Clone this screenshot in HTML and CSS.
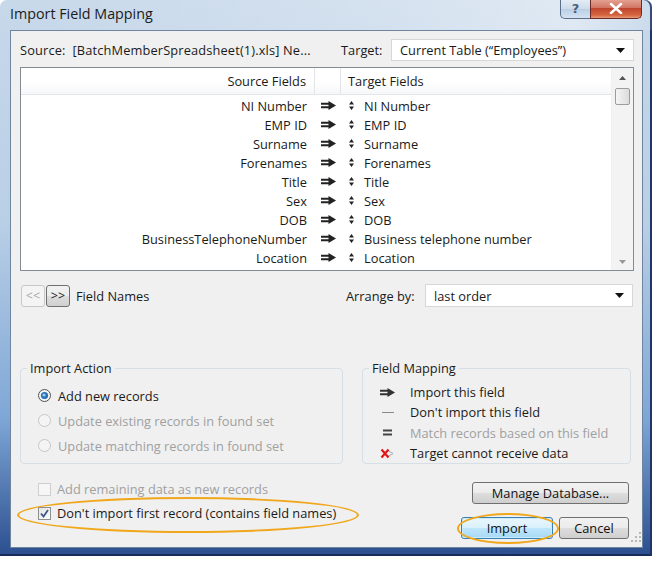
FILE: index.html
```html
<!DOCTYPE html>
<html>
<head>
<meta charset="utf-8">
<link rel="stylesheet" href="styles.css">
</head>
<body>
<div class="window">
  <div class="titlebar">
    <span class="title">Import Field Mapping</span>
    <div class="caption-btns">
      <div class="cbtn help">?</div>
      <div class="cbtn close"><svg width="14" height="11" viewBox="0 0 14 11"><path d="M2 1 L12 10 M12 1 L2 10" stroke="#fff" stroke-width="2.6" stroke-linecap="round"/></svg></div>
    </div>
  </div>
  <div class="client">
    <div class="toprow">
      <span class="src">Source:&nbsp; [BatchMemberSpreadsheet(1).xls] Ne...</span>
      <span class="tlabel">Target:</span>
      <div class="combo target"><span>Current Table (“Employees”)</span><svg class="dd" width="9" height="5" viewBox="0 0 9 5"><path d="M0 0 H9 L4.5 5 Z" fill="#111"/></svg></div>
    </div>

    <div class="list">
      <div class="list-main">
        <div class="lrow lhead">
          <div class="c-src">Source Fields</div>
          <div class="c-arr"></div>
          <div class="c-tgt">Target Fields</div>
        </div>
        <div class="lbody">
          <div class="lrow"><div class="c-src">NI Number</div><div class="c-arr"><svg class="arr" width="15" height="9" viewBox="0 0 15 9"><path d="M0 2.7 H8 M0 6.3 H8" stroke="#222" stroke-width="2"/><path d="M7.5 0 L15 4.5 L7.5 9 Z" fill="#222"/></svg></div><div class="c-tgt"><svg class="ud" width="5" height="9" viewBox="0 0 5 9"><path d="M2.5 0 L5 3.5 H0 Z M2.5 9 L5 5.5 H0 Z" fill="#222"/></svg><span>NI Number</span></div></div>
          <div class="lrow"><div class="c-src">EMP ID</div><div class="c-arr"><svg class="arr" width="15" height="9" viewBox="0 0 15 9"><path d="M0 2.7 H8 M0 6.3 H8" stroke="#222" stroke-width="2"/><path d="M7.5 0 L15 4.5 L7.5 9 Z" fill="#222"/></svg></div><div class="c-tgt"><svg class="ud" width="5" height="9" viewBox="0 0 5 9"><path d="M2.5 0 L5 3.5 H0 Z M2.5 9 L5 5.5 H0 Z" fill="#222"/></svg><span>EMP ID</span></div></div>
          <div class="lrow"><div class="c-src">Surname</div><div class="c-arr"><svg class="arr" width="15" height="9" viewBox="0 0 15 9"><path d="M0 2.7 H8 M0 6.3 H8" stroke="#222" stroke-width="2"/><path d="M7.5 0 L15 4.5 L7.5 9 Z" fill="#222"/></svg></div><div class="c-tgt"><svg class="ud" width="5" height="9" viewBox="0 0 5 9"><path d="M2.5 0 L5 3.5 H0 Z M2.5 9 L5 5.5 H0 Z" fill="#222"/></svg><span>Surname</span></div></div>
          <div class="lrow"><div class="c-src">Forenames</div><div class="c-arr"><svg class="arr" width="15" height="9" viewBox="0 0 15 9"><path d="M0 2.7 H8 M0 6.3 H8" stroke="#222" stroke-width="2"/><path d="M7.5 0 L15 4.5 L7.5 9 Z" fill="#222"/></svg></div><div class="c-tgt"><svg class="ud" width="5" height="9" viewBox="0 0 5 9"><path d="M2.5 0 L5 3.5 H0 Z M2.5 9 L5 5.5 H0 Z" fill="#222"/></svg><span>Forenames</span></div></div>
          <div class="lrow"><div class="c-src">Title</div><div class="c-arr"><svg class="arr" width="15" height="9" viewBox="0 0 15 9"><path d="M0 2.7 H8 M0 6.3 H8" stroke="#222" stroke-width="2"/><path d="M7.5 0 L15 4.5 L7.5 9 Z" fill="#222"/></svg></div><div class="c-tgt"><svg class="ud" width="5" height="9" viewBox="0 0 5 9"><path d="M2.5 0 L5 3.5 H0 Z M2.5 9 L5 5.5 H0 Z" fill="#222"/></svg><span>Title</span></div></div>
          <div class="lrow"><div class="c-src">Sex</div><div class="c-arr"><svg class="arr" width="15" height="9" viewBox="0 0 15 9"><path d="M0 2.7 H8 M0 6.3 H8" stroke="#222" stroke-width="2"/><path d="M7.5 0 L15 4.5 L7.5 9 Z" fill="#222"/></svg></div><div class="c-tgt"><svg class="ud" width="5" height="9" viewBox="0 0 5 9"><path d="M2.5 0 L5 3.5 H0 Z M2.5 9 L5 5.5 H0 Z" fill="#222"/></svg><span>Sex</span></div></div>
          <div class="lrow"><div class="c-src">DOB</div><div class="c-arr"><svg class="arr" width="15" height="9" viewBox="0 0 15 9"><path d="M0 2.7 H8 M0 6.3 H8" stroke="#222" stroke-width="2"/><path d="M7.5 0 L15 4.5 L7.5 9 Z" fill="#222"/></svg></div><div class="c-tgt"><svg class="ud" width="5" height="9" viewBox="0 0 5 9"><path d="M2.5 0 L5 3.5 H0 Z M2.5 9 L5 5.5 H0 Z" fill="#222"/></svg><span>DOB</span></div></div>
          <div class="lrow"><div class="c-src">BusinessTelephoneNumber</div><div class="c-arr"><svg class="arr" width="15" height="9" viewBox="0 0 15 9"><path d="M0 2.7 H8 M0 6.3 H8" stroke="#222" stroke-width="2"/><path d="M7.5 0 L15 4.5 L7.5 9 Z" fill="#222"/></svg></div><div class="c-tgt"><svg class="ud" width="5" height="9" viewBox="0 0 5 9"><path d="M2.5 0 L5 3.5 H0 Z M2.5 9 L5 5.5 H0 Z" fill="#222"/></svg><span>Business telephone number</span></div></div>
          <div class="lrow"><div class="c-src">Location</div><div class="c-arr"><svg class="arr" width="15" height="9" viewBox="0 0 15 9"><path d="M0 2.7 H8 M0 6.3 H8" stroke="#222" stroke-width="2"/><path d="M7.5 0 L15 4.5 L7.5 9 Z" fill="#222"/></svg></div><div class="c-tgt"><svg class="ud" width="5" height="9" viewBox="0 0 5 9"><path d="M2.5 0 L5 3.5 H0 Z M2.5 9 L5 5.5 H0 Z" fill="#222"/></svg><span>Location</span></div></div>
        </div>
      </div>
      <div class="vscroll">
        <div class="sarrow top"><svg width="7" height="4" viewBox="0 0 7 4"><path d="M0 4 L3.5 0 L7 4 Z" fill="#555"/></svg></div>
        <div class="thumb"></div>
        <div class="strack"></div>
        <div class="sarrow"><svg width="7" height="4" viewBox="0 0 7 4"><path d="M0 0 L3.5 4 L7 0 Z" fill="#999"/></svg></div>
      </div>
    </div>

    <div class="navrow">
      <div class="nbtn disabled">&lt;&lt;</div>
      <div class="nbtn">&gt;&gt;</div>
      <span class="fnames">Field Names</span>
      <span class="arrlabel">Arrange by:</span>
      <div class="combo arrange"><span>last order</span><svg class="dd" width="9" height="5" viewBox="0 0 9 5"><path d="M0 0 H9 L4.5 5 Z" fill="#111"/></svg></div>
    </div>

    <div class="groups">
      <fieldset class="grp action">
        <legend>Import Action</legend>
        <div class="gbody">
          <div class="opt"><svg class="radio" width="13" height="13" viewBox="0 0 13 13"><circle cx="6.5" cy="6.5" r="6" fill="#f4f4f4" stroke="#4f5459"/><circle cx="6.5" cy="6.5" r="3.6" fill="#2a6fb3"/><circle cx="6" cy="6" r="1.6" fill="#8fd0f5"/></svg><span>Add new records</span></div>
          <div class="opt disabled"><svg class="radio" width="13" height="13" viewBox="0 0 13 13"><circle cx="6.5" cy="6.5" r="6" fill="#f4f4f4" stroke="#c5c5c5"/></svg><span>Update existing records in found set</span></div>
          <div class="opt disabled"><svg class="radio" width="13" height="13" viewBox="0 0 13 13"><circle cx="6.5" cy="6.5" r="6" fill="#f4f4f4" stroke="#c5c5c5"/></svg><span>Update matching records in found set</span></div>
        </div>
      </fieldset>
      <fieldset class="grp mapping">
        <legend>Field Mapping</legend>
        <div class="gbody">
          <div class="key"><span class="kicon"><svg width="15" height="9" viewBox="0 0 15 9"><path d="M0 2.7 H8 M0 6.3 H8" stroke="#333" stroke-width="2"/><path d="M7.5 0 L15 4.5 L7.5 9 Z" fill="#333"/></svg></span><span>Import this field</span></div>
          <div class="key"><span class="kicon"><svg width="15" height="9" viewBox="0 0 15 9"><path d="M2 4.5 H14" stroke="#888" stroke-width="1"/></svg></span><span>Don't import this field</span></div>
          <div class="key disabled"><span class="kicon"><svg width="15" height="9" viewBox="0 0 15 9"><path d="M3 2.5 H12 M3 6.5 H12" stroke="#444" stroke-width="2"/></svg></span><span>Match records based on this field</span></div>
          <div class="key"><span class="kicon"><svg width="16" height="11" viewBox="0 0 16 11"><path d="M7 2 L13 5.5 L7 9" fill="none" stroke="#aaa" stroke-width="1"/><path d="M1.5 1.5 L8.5 9.5 M8.5 1.5 L1.5 9.5" stroke="#e01818" stroke-width="2.2"/></svg></span><span>Target cannot receive data</span></div>
        </div>
      </fieldset>
    </div>

    <div class="bottom">
      <div class="checks">
        <div class="chk disabled"><span class="box"></span><span>Add remaining data as new records</span></div>
        <div class="chk"><span class="box on"><svg width="11" height="11" viewBox="0 0 11 11"><path d="M2 5.5 L4.5 8.5 L9 2" fill="none" stroke="#3d5688" stroke-width="1.8"/></svg></span><span>Don't import first record (contains field names)</span></div>
      </div>
      <div class="btns">
        <div class="btn manage">Manage Database...</div>
        <div class="btnrow">
          <div class="btn import">Import</div>
          <div class="btn cancel">Cancel</div>
        </div>
      </div>
    </div>
    <div class="grip"><svg width="10" height="10" viewBox="0 0 10 10"><g fill="#b8b8b8"><rect x="8" y="0" width="2" height="2"/><rect x="4" y="4" width="2" height="2"/><rect x="8" y="4" width="2" height="2"/><rect x="0" y="8" width="2" height="2"/><rect x="4" y="8" width="2" height="2"/><rect x="8" y="8" width="2" height="2"/></g></svg></div>
  </div>
  <div class="ring ring1"></div>
  <div class="ring ring2"></div>
</div>
</body>
</html>
```

FILE: styles.css
```css
html, body {
  margin: 0;
  padding: 0;
  background: #ffffff;
}
body {
  font-family: "Open Sans", "Noto Sans", sans-serif;
  font-size: 12.8px;
  color: #1a1a1a;
}
.window {
  position: relative;
  width: 652px;
  height: 556px;
  box-sizing: border-box;
  border-radius: 7px 7px 0 0;
  background: linear-gradient(to bottom, #c7d8ea 0%, #b9cfe6 40%, #7fa7d6 75%, #2b4f8f 100%);
  box-shadow: inset -2px 0 0 #1d3567, inset 0 -2px 0 #172c58;
  padding: 0 9px 0 10px;
  display: flex;
  flex-direction: column;
}
.titlebar {
  height: 30px;
  display: flex;
  align-items: flex-start;
  background: linear-gradient(to right, rgba(255,255,255,0) 0%, rgba(255,255,255,0.25) 60%, rgba(255,255,255,0.45) 88%, rgba(255,255,255,0.1) 100%);
  margin: 0 -9px 0 -10px;
  padding: 0 9px 0 10px;
  border-radius: 7px 7px 0 0;
}
.title {
  font-size: 14.3px;
  color: #1b1b1b;
  margin-top: 4px;
  flex: 1;
}
.caption-btns {
  display: flex;
  margin-top: -1px;
  margin-right: 1px;
}
.cbtn {
  height: 20px;
  display: flex;
  align-items: center;
  justify-content: center;
  box-sizing: border-box;
  border: 1px solid #5c6f8a;
  border-top: none;
}
.help {
  width: 30px;
  border-radius: 0 0 0 5px;
  border-right: none;
  background: linear-gradient(to bottom, #e6eef7 0%, #cfdceb 50%, #b9cde3 51%, #d4e3f2 100%);
  color: #4b5f7a;
  font-weight: bold;
  font-size: 13px;
  font-family: "DejaVu Sans", sans-serif;
}
.close {
  width: 52px;
  border-radius: 0 0 5px 0;
  border-color: #6b2a26;
  background: linear-gradient(to bottom, #e7a597 0%, #d27766 45%, #c0452e 50%, #d5653f 85%, #e79c78 100%);
}

.client {
  flex: 1;
  background: #f0f0f0;
  border: 1px solid #6f849e;
  margin-bottom: 8px;
  padding: 8px 8px 0 9px;
  display: flex;
  flex-direction: column;
  position: relative;
}
.toprow {
  display: flex;
  align-items: center;
  height: 22px;
}
.src {
  width: 321px;
  white-space: nowrap;
  overflow: hidden;
  letter-spacing: 0.15px;
}
.tlabel {
  width: 50px;
}
.combo {
  display: flex;
  align-items: center;
  justify-content: space-between;
  background: #fff;
  border: 1px solid #d7d7d7;
  box-sizing: border-box;
  height: 22px;
  padding: 0 8px 0 8px;
}
.target {
  flex: 1;
}
.list {
  margin-top: 6px;
  height: 204px;
  border: 1px solid #838b95;
  box-sizing: border-box;
  background: #fff;
  display: flex;
}
.list-main {
  flex: 1;
  display: flex;
  flex-direction: column;
}
.lrow {
  display: flex;
  height: 19px;
  align-items: center;
}
.lhead {
  height: 27px;
  background: linear-gradient(to bottom, #ffffff 0%, #ffffff 50%, #f6f7f8 100%);
  border-bottom: 1px solid #e3e5e8;
  box-sizing: border-box;
}
.lbody {
  padding-top: 1px;
}
.c-src {
  width: 294px;
  box-sizing: border-box;
  text-align: right;
  padding-right: 8px;
  white-space: nowrap;
}
.c-arr {
  width: 26px;
  display: flex;
  justify-content: center;
}
.c-tgt {
  flex: 1;
  display: flex;
  align-items: center;
  padding-left: 7px;
}
.lhead .c-src, .lhead .c-arr {
  height: 100%;
  display: flex;
  align-items: center;
  justify-content: flex-end;
  border-right: 1px solid #e3e5e8;
}
.lhead .c-arr {
  width: 25px;
}
.ud {
  margin-right: 10px;
  margin-left: 1px;
}
.vscroll {
  width: 21px;
  display: flex;
  flex-direction: column;
  align-items: center;
  background: #f3f3f3;
  border-left: 1px solid #f0f0f0;
}
.sarrow {
  height: 17px;
  display: flex;
  align-items: center;
  justify-content: center;
}
.sarrow.top {
  height: 20px;
}
.thumb {
  width: 15px;
  height: 17px;
  box-sizing: border-box;
  border: 1px solid #9c9c9c;
  border-radius: 2px;
  background: linear-gradient(to right, #f5f5f5, #dcdcdc);
}
.strack {
  flex: 1;
}

.navrow {
  margin-top: 13px;
  height: 23px;
  display: flex;
  align-items: center;
}
.nbtn {
  width: 24px;
  height: 22px;
  box-sizing: border-box;
  border: 1px solid #707070;
  border-radius: 3px;
  background: linear-gradient(to bottom, #f2f2f2 0%, #ebebeb 50%, #dddddd 51%, #cfcfcf 100%);
  display: flex;
  align-items: center;
  justify-content: center;
  font-size: 12.5px;
  margin-right: 1px;
  color: #222;
}
.nbtn.disabled {
  border-color: #c8c8c8;
  background: #f4f4f4;
  color: #a8a8a8;
  margin-left: 1px;
}
.fnames {
  margin-left: 5px;
  width: 270px;
}
.arrlabel {
  width: 79px;
}
.arrange {
  width: 208px;
  height: 23px;
}

.groups {
  display: flex;
  margin-top: 53px;
}
.grp {
  margin: 0;
  border: 1px solid #d5dfe5;
  border-radius: 4px;
  padding: 0;
  box-sizing: border-box;
  height: 104px;
}
.grp legend {
  padding: 0 3px;
  margin-left: 6px;
  line-height: 16px;
}
.action {
  width: 323px;
}
.action .gbody {
  padding: 7px 0 0 17px;
}
.mapping {
  width: 269px;
  margin-left: 19px;
}
.mapping .gbody {
  padding: 6px 0 0 17px;
}
.opt {
  display: flex;
  align-items: center;
  height: 25px;
}
.opt .radio {
  margin-right: 7px;
}
.disabled {
  color: #a0a0a0;
}
.key {
  display: flex;
  align-items: center;
  height: 20.3px;
}
.kicon {
  width: 30px;
  display: flex;
  align-items: center;
}

.bottom {
  display: flex;
  justify-content: space-between;
  margin-top: 13px;
  padding-right: 5px;
}
.checks {
  padding-left: 18px;
}
.chk {
  display: flex;
  align-items: center;
  height: 24px;
}
.box {
  width: 13px;
  height: 13px;
  box-sizing: border-box;
  border: 1px solid #cfcfcf;
  background: #f6f6f6;
  margin-right: 6px;
  display: flex;
  align-items: center;
  justify-content: center;
}
.box.on {
  border-color: #8e8f8f;
  background: linear-gradient(135deg, #e3e3e3, #fdfdfd);
}
.btns {
  display: flex;
  flex-direction: column;
  align-items: flex-end;
}
.btn {
  height: 22px;
  box-sizing: border-box;
  border: 1px solid #707070;
  border-radius: 3px;
  background: linear-gradient(to bottom, #f2f2f2 0%, #ebebeb 50%, #dddddd 51%, #cfcfcf 100%);
  display: flex;
  align-items: center;
  justify-content: center;
  color: #111;
}
.manage {
  width: 157px;
  margin-top: 5px;
}
.btnrow {
  display: flex;
  margin-top: 13px;
}
.import {
  width: 92px;
  border-color: #3c7fb1;
  background: linear-gradient(to bottom, #eaf6fd 0%, #d9f0fc 50%, #bee6fd 51%, #a7d9f5 100%);
  box-shadow: inset 0 0 0 1px #c8ecfd;
}
.cancel {
  width: 70px;
  margin-left: 6px;
}
.grip {
  position: absolute;
  right: 1px;
  bottom: 1px;
}
.ring {
  position: absolute;
  border: 2.5px solid #f0a71c;
  border-radius: 50%;
  box-sizing: border-box;
  pointer-events: none;
}
.ring1 {
  left: 17px;
  top: 497px;
  width: 342px;
  height: 36px;
}
.ring2 {
  left: 457px;
  top: 513px;
  width: 102px;
  height: 31px;
}
```
